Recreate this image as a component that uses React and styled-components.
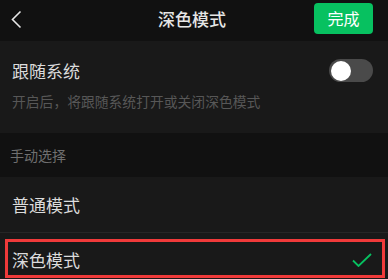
import styled, { createGlobalStyle } from 'styled-components';

const GlobalStyle = createGlobalStyle`
  html, body {
    margin: 0;
    padding: 0;
    background: #191919;
  }
  body {
    font-family: "Noto Sans CJK SC", "Noto Sans", sans-serif;
  }
`;

const Page = styled.div`
  width: 388px;
  height: 279px;
  overflow: hidden;
  background: #191919;
  display: flex;
  flex-direction: column;
`;

const Header = styled.header`
  height: 41px;
  flex-shrink: 0;
  background: #111111;
  display: grid;
  grid-template-columns: 1fr auto 1fr;
  align-items: start;
  padding: 3px 15px 0 11px;
  box-sizing: border-box;
`;

const BackButton = styled.button`
  justify-self: start;
  background: none;
  border: none;
  padding: 0;
  margin-top: 7px;
  width: 12px;
  height: 20px;
  display: flex;
  cursor: pointer;
`;

const Title = styled.h1`
  margin: 0;
  margin-top: 5px;
  font-size: 17px;
  font-weight: 500;
  color: #e6e6e6;
  line-height: 22px;
`;

const DoneButton = styled.button`
  justify-self: end;
  width: 59px;
  height: 31px;
  border: none;
  border-radius: 4px;
  background: #07c160;
  color: #ffffff;
  font-family: inherit;
  font-size: 16px;
  line-height: 31px;
  padding: 0;
`;

const Section = styled.section`
  background: #191919;
  padding: 0 12px;
  flex-shrink: 0;
`;

const FollowRow = styled.div`
  display: flex;
  align-items: center;
  justify-content: space-between;
  padding: 18px 3px 0 0;
  height: 23px;
`;

const Label = styled.span`
  font-size: 17px;
  color: #dcdcdc;
  line-height: 23px;
`;

const Hint = styled.p`
  margin: 9px 0 0;
  font-size: 13.8px;
  color: #575757;
  line-height: 20px;
  padding-bottom: 22px;
`;

const Toggle = styled.div`
  width: 44px;
  height: 23px;
  border-radius: 12px;
  background: #4a4a4a;
  position: relative;
  &::after {
    content: '';
    position: absolute;
    left: 2px;
    top: 1.5px;
    width: 20px;
    height: 20px;
    border-radius: 50%;
    background: #ffffff;
  }
`;

const GroupTitle = styled.div`
  height: 44px;
  flex-shrink: 0;
  background: #111111;
  padding: 0 10px;
  display: flex;
  align-items: center;
  font-size: 14px;
  color: #6f6f6f;
`;

const OptionRow = styled.div`
  height: ${(p) => p.$h}px;
  padding: ${(p) => p.$top}px 16px 0 12px;
  box-sizing: border-box;
  display: flex;
  align-items: flex-start;
  justify-content: space-between;
  border-bottom: ${(p) => (p.$divider ? '1px solid #262626' : 'none')};
  position: relative;
  flex-shrink: 0;
  ${(p) =>
    p.$marked &&
    `
    &::before {
      content: '';
      position: absolute;
      left: 5px;
      right: 3px;
      top: 6px;
      height: 33px;
      border: 3px solid #f03a3a;
    }
  `}
`;

const CheckMark = styled.svg`
  margin-top: 5px;
`;

const Check = () => (
  <CheckMark width="20" height="14" viewBox="0 0 20 14">
    <path d="M1 7.5 L6.5 13 L19 1" fill="none" stroke="#07c160" strokeWidth="1.8" />
  </CheckMark>
);

export default function App() {
  return (
    <>
      <GlobalStyle />
      <Page>
        <Header>
          <BackButton aria-label="返回">
            <svg width="12" height="20" viewBox="0 0 12 20">
              <path d="M9.5 1.5 L1.5 9.5 L9.5 17.5" fill="none" stroke="#e8e8e8" strokeWidth="1.6" />
            </svg>
          </BackButton>
          <Title>深色模式</Title>
          <DoneButton>完成</DoneButton>
        </Header>
        <Section>
          <FollowRow>
            <Label>跟随系统</Label>
            <Toggle />
          </FollowRow>
          <Hint>开启后，将跟随系统打开或关闭深色模式</Hint>
        </Section>
        <GroupTitle>手动选择</GroupTitle>
        <OptionRow $h={56} $top={16} $divider>
          <Label>普通模式</Label>
        </OptionRow>
        <OptionRow $h={46} $top={15} $marked>
          <Label>深色模式</Label>
          <Check />
        </OptionRow>
      </Page>
    </>
  );
}
